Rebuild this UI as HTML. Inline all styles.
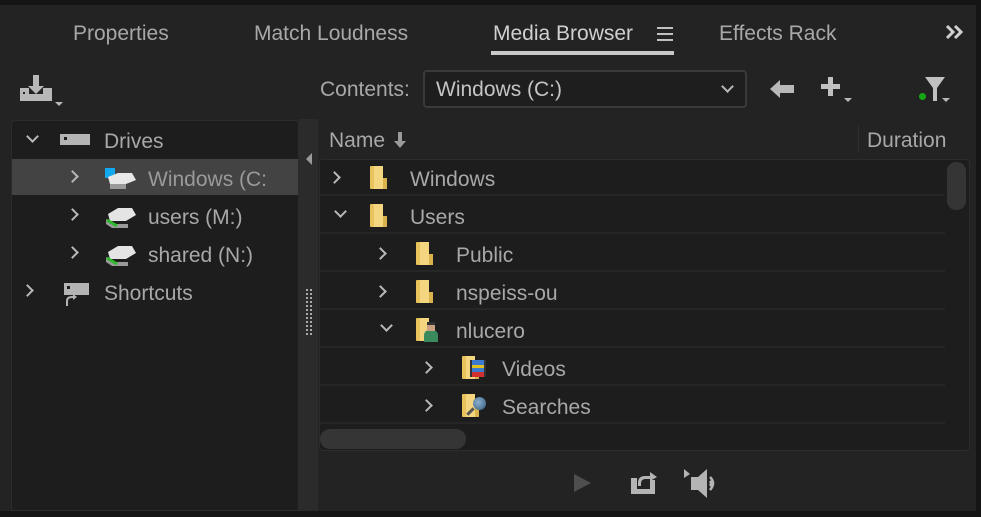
<!DOCTYPE html>
<html><head><meta charset="utf-8"><style>
*{margin:0;padding:0;box-sizing:border-box}
body{width:981px;height:517px;background:#232323;position:relative;overflow:hidden;font-family:"Liberation Sans",sans-serif;color:#a8a8a8}
.a{position:absolute}
.t{font-size:21px;white-space:nowrap;line-height:24px}
.row{position:absolute;left:0;width:625px;height:36px;background:#1d1d1d;border-bottom:2px solid #262626}
.chev{position:absolute;width:9px;height:9px;border-right:2px solid #b8b8b8;border-bottom:2px solid #b8b8b8}
.r{transform:rotate(-45deg)}
.d{transform:rotate(45deg)}
.fold{position:absolute;width:17px;height:23px;background:linear-gradient(90deg,#e8c25a 0 4px,#f5d680 4px);border-radius:1px}
.fold:after{content:"";position:absolute;right:0;top:0;width:4px;height:12px;background:#1d1d1d}
.fold:before{content:"";position:absolute;right:0;top:12px;width:4px;height:11px;background:#d9b24c}
</style></head><body>
<div class="a" style="left:0;top:0;width:981px;height:5px;background:#151515"></div>
<div class="a" style="left:0;top:511px;width:981px;height:6px;background:#151515"></div>
<div class="a" style="left:976px;top:0;width:5px;height:517px;background:#151515"></div>

<div class="a t" style="left:73px;top:22px">Properties</div>
<div class="a t" style="left:254px;top:22px">Match Loudness</div>
<div class="a t" style="left:493px;top:22px;color:#d0d0d0">Media Browser</div>
<div class="a" style="left:657px;top:27px;width:16px;height:2px;background:#c0c0c0;box-shadow:0 6px 0 #c0c0c0,0 12px 0 #c0c0c0"></div>
<div class="a" style="left:491px;top:51px;width:183px;height:4px;background:#c8c8c8"></div>
<div class="a t" style="left:719px;top:22px">Effects Rack</div>
<svg class="a" style="left:945px;top:24px" width="22" height="16"><path d="M2 2l6 6-6 6M10 2l6 6-6 6" stroke="#d0d0d0" stroke-width="3" fill="none"/></svg>

<svg class="a" style="left:18px;top:74px" width="48" height="34"><path d="M15 1v11h-5l8 8 8-8h-5V1z" fill="#b8b8b8"/><rect x="2" y="14" width="9" height="8" fill="#b8b8b8"/><rect x="25" y="14" width="9" height="8" fill="#b8b8b8"/><rect x="2" y="20" width="32" height="7" fill="#b8b8b8"/><rect x="5" y="18" width="2" height="2" fill="#232323"/><path d="M37 28h8l-4 4z" fill="#b8b8b8"/></svg>
<div class="a t" style="left:320px;top:78px">Contents:</div>
<div class="a" style="left:423px;top:70px;width:324px;height:38px;border:2px solid #3a3a3a;border-radius:4px;background:#1e1e1e"></div>
<div class="a t" style="left:436px;top:78px;color:#c4c4c4">Windows (C:)</div>
<div class="chev d a" style="left:723px;top:82px"></div>
<svg class="a" style="left:768px;top:78px" width="28" height="22"><path d="M2 11l10-9v5h14v8H12v5z" fill="#b8b8b8"/></svg>
<svg class="a" style="left:821px;top:76px" width="34" height="30"><path d="M7 1h5v7h7v5h-7v7H7v-7H0V8h7z" fill="#c0c0c0"/><path d="M23 22h8l-4 4z" fill="#b8b8b8"/></svg>
<svg class="a" style="left:918px;top:76px" width="36" height="30"><path d="M7 1h20l-8 11v13h-4V12z" fill="#c0c0c0"/><circle cx="4.5" cy="20.5" r="3.5" fill="#13a813"/><path d="M24 22h8l-4 4z" fill="#b8b8b8"/></svg>

<div class="a" style="left:11px;top:120px;width:288px;height:391px;background:#1d1d1d;border:1px solid #2c2c2c;border-radius:4px 4px 0 0"></div>
<div class="chev d a" style="left:28px;top:132px"></div>
<div class="a" style="left:60px;top:134px;width:30px;height:11px;background:#b4b4b4"></div>
<div class="a" style="left:64px;top:137px;width:3px;height:3px;background:#1d1d1d"></div>
<div class="a t" style="left:104px;top:130px">Drives</div>
<div class="a" style="left:12px;top:159px;width:286px;height:36px;background:#434343"></div>
<div class="chev r a" style="left:68px;top:172px"></div>
<svg class="a" style="left:104px;top:167px" width="32" height="24"><rect x="1" y="1" width="10" height="10" fill="#10a8ee"/><path d="M4 10l10-4h14l4 7-10 4H6z" fill="#e8e8e8"/><path d="M6 17h16v5H6z" fill="#9a9a9a"/></svg>
<div class="a t" style="left:148px;top:168px;color:#9a9a9a">Windows (C:</div>
<div class="chev r a" style="left:68px;top:210px"></div>
<svg class="a" style="left:104px;top:206px" width="32" height="24"><path d="M4 8l10-6h14l4 7-10 6H6z" fill="#e4e4e4"/><path d="M2 13l8 5h14v4H8l-6-4z" fill="#9a9a9a"/><path d="M3 14l10 6" stroke="#2eb82e" stroke-width="3"/></svg>
<div class="a t" style="left:148px;top:206px">users (M:)</div>
<div class="chev r a" style="left:68px;top:248px"></div>
<svg class="a" style="left:104px;top:244px" width="32" height="24"><path d="M4 8l10-6h14l4 7-10 6H6z" fill="#e4e4e4"/><path d="M2 13l8 5h14v4H8l-6-4z" fill="#9a9a9a"/><path d="M3 14l10 6" stroke="#2eb82e" stroke-width="3"/></svg>
<div class="a t" style="left:148px;top:244px">shared (N:)</div>
<div class="chev r a" style="left:23px;top:286px"></div>
<svg class="a" style="left:61px;top:282px" width="30" height="26"><rect x="3" y="1" width="25" height="12" fill="#b4b4b4"/><rect x="6" y="4" width="3" height="3" fill="#1d1d1d"/><path d="M6 24v-5q0-4 5-4h3" stroke="#b4b4b4" stroke-width="2" fill="none"/><path d="M12 12l4 3-4 3z" fill="#b4b4b4"/></svg>
<div class="a t" style="left:104px;top:282px">Shortcuts</div>

<div class="a" style="left:299px;top:119px;width:19px;height:392px;background:#2b2b2b"></div>
<svg class="a" style="left:305px;top:152px" width="8" height="14"><path d="M7 1L1 7l6 6z" fill="#9a9a9a"/></svg>
<div class="a" style="left:306px;top:289px;width:6px;height:48px;background:repeating-linear-gradient(#aaa 0 2px,transparent 2px 4px);-webkit-mask:linear-gradient(90deg,#000 0 2px,transparent 2px 4px,#000 4px)"></div>

<div class="a t" style="left:329px;top:129px">Name</div>
<svg class="a" style="left:392px;top:131px" width="16" height="18"><path d="M6 1h4v9h4l-6 7-6-7h4z" fill="#9a9a9a"/></svg>
<div class="a" style="left:858px;top:126px;width:1px;height:27px;background:#303030"></div>
<div class="a t" style="left:867px;top:129px">Duration</div>
<div class="a" style="left:319px;top:159px;width:651px;height:292px;background:#1d1d1d;border:1px solid #2c2c2c;border-radius:4px"></div>
<div class="a" style="left:320px;top:160px;width:625px;height:266px;overflow:hidden">
 <div class="row" style="top:0"><div class="chev r" style="left:10px;top:13px"></div><div class="fold" style="left:50px;top:6px"></div><div class="t a" style="left:90px;top:8px">Windows</div></div>
 <div class="row" style="top:38px"><div class="chev d" style="left:16px;top:9px"></div><div class="fold" style="left:50px;top:6px"></div><div class="t a" style="left:90px;top:8px">Users</div></div>
 <div class="row" style="top:76px"><div class="chev r" style="left:56px;top:13px"></div><div class="fold" style="left:96px;top:6px"></div><div class="t a" style="left:136px;top:8px">Public</div></div>
 <div class="row" style="top:114px"><div class="chev r" style="left:56px;top:13px"></div><div class="fold" style="left:96px;top:6px"></div><div class="t a" style="left:136px;top:8px">nspeiss-ou</div></div>
 <div class="row" style="top:152px"><div class="chev d" style="left:62px;top:9px"></div><div class="fold" style="left:96px;top:6px"></div><div class="a" style="left:104px;top:18px;width:14px;height:12px;background:#3a8a5e;border-radius:5px 5px 0 0"></div><div class="a" style="left:107px;top:10px;width:8px;height:9px;background:#c9a080;border-top:3px solid #333"></div><div class="t a" style="left:136px;top:8px">nlucero</div></div>
 <div class="row" style="top:190px"><div class="chev r" style="left:102px;top:13px"></div><div class="fold" style="left:142px;top:6px"></div><div class="a" style="left:150px;top:10px;width:16px;height:17px;background:linear-gradient(#3a7ad0 0 5px,#e0c020 5px 8px,#3a7ad0 8px 12px,#d03030 12px);border-left:2px solid #333;border-right:2px solid #333"></div><div class="t a" style="left:182px;top:8px">Videos</div></div>
 <div class="row" style="top:228px"><div class="chev r" style="left:102px;top:13px"></div><div class="fold" style="left:142px;top:6px"></div><div class="a" style="left:153px;top:9px;width:13px;height:13px;border-radius:50%;background:radial-gradient(circle at 40% 40%,#8ab0d0,#355878)"></div><div class="a" style="left:146px;top:22px;width:9px;height:3px;background:#555;transform:rotate(-45deg)"></div><div class="t a" style="left:182px;top:8px">Searches</div></div>
</div>
<div class="a" style="left:947px;top:162px;width:19px;height:48px;background:#353535;border-radius:9px"></div>
<div class="a" style="left:320px;top:429px;width:146px;height:20px;background:#353535;border-radius:10px"></div>

<svg class="a" style="left:572px;top:472px" width="22" height="22"><path d="M2 2l17 9-17 9z" fill="#4e4e4e"/></svg>
<svg class="a" style="left:629px;top:470px" width="30" height="26"><path d="M2 8h6v11h18v5H2z" fill="#b4b4b4"/><path d="M21 11v-2h-5q-4 0-4 5v2h-3v-3q0-7 7-7h5V2l7 5z" fill="#b4b4b4"/><rect x="21" y="10" width="5" height="10" fill="#b4b4b4"/></svg>
<svg class="a" style="left:683px;top:468px" width="44" height="32"><path d="M1 1l6 5-6 4z" fill="#b4b4b4"/><path d="M8 9h7l9-8v29l-9-8H8z" fill="#b4b4b4"/><path d="M27 9q6 6 0 13" stroke="#b4b4b4" stroke-width="2.5" fill="none"/><path d="M27 13q2 2.5 0 5" stroke="#b4b4b4" stroke-width="2.5" fill="none"/></svg>
</body></html>
